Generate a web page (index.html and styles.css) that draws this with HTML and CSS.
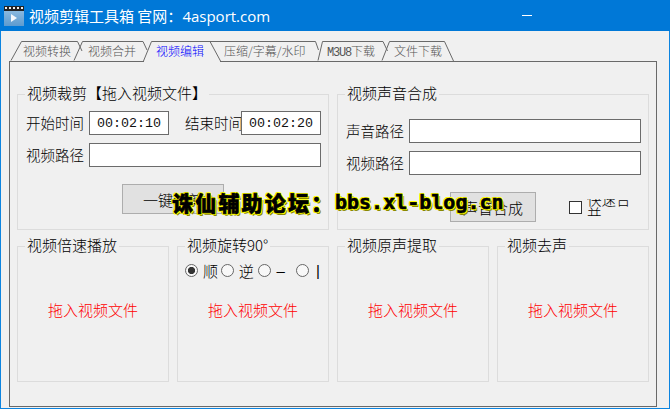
FILE: index.html
```html
<!DOCTYPE html>
<html lang="zh-CN">
<head>
<meta charset="utf-8">
<title>视频剪辑工具箱</title>
<link rel="stylesheet" href="styles.css">
</head>
<body>
<div class="window">
  <header class="titlebar">
    <svg class="app-icon" width="20" height="20" viewBox="0 0 20 20">
      <defs><linearGradient id="ic" x1="0" y1="0" x2="0" y2="1"><stop offset="0" stop-color="#8dbbe0"/><stop offset="1" stop-color="#5e9bcf"/></linearGradient></defs>
      <rect x="0" y="4" width="20" height="16" fill="url(#ic)"/>
      <rect x="0" y="0" width="20" height="5" fill="#222"/>
      <path d="M1 1h2v2h-2zM5 1h2v2h-2zM9 1h2v2h-2zM13 1h2v2h-2zM17 1h2v2h-2z" fill="#eee"/>
      <path d="M7 8l6 4-6 4z" fill="#f4f8fc"/>
    </svg>
    <span class="title">视频剪辑工具箱 官网：<span class="title-url">4asport.com</span></span>
    <span class="minimize"></span>
  </header>
  <nav class="tabs">
    <svg class="tab-lines" width="648" height="31" viewBox="9 31 648 31">
      <path d="M11 60.500L21.500 41.500H77.500L82 51" />
      <path d="M74 60.500L82.500 41.500H143L147 50" />
      <path d="M210 41.500H315.500L318.500 50" />
      <path d="M318 60.500L322.500 41.500H383L387.500 51" />
      <path d="M382 60.500L389.500 41.500H444.500L453.500 61" />
      <path class="gap" d="M144 61.500H220" />
      <path d="M143.500 61L151.500 41.500H210L220.500 61" />
    </svg>
    <span class="tab">视频转换</span>
    <span class="tab">视频合并</span>
    <span class="tab tab-active">视频编辑</span>
    <span class="tab">压缩/字幕/水印</span>
    <span class="tab"><span class="tab-latin">M3U8</span>下载</span>
    <span class="tab">文件下载</span>
  </nav>
  <main class="panel">
    <fieldset class="group span-2">
      <legend>视频裁剪【拖入视频文件】</legend>
      <div class="row first-row">
        <label class="field-label">开始时间</label>
        <input class="field time" value="00:02:10">
        <label class="field-label clipped">结束时间</label>
        <input class="field time" value="00:02:20">
      </div>
      <div class="row">
        <label class="field-label">视频路径</label>
        <input class="field path">
      </div>
      <div class="row action-row crop-action">
        <button class="btn btn-crop">一键裁剪</button>
      </div>
    </fieldset>
    <fieldset class="group span-2">
      <legend>视频声音合成</legend>
      <div class="row first-row-b">
        <label class="field-label">声音路径</label>
        <input class="field path">
      </div>
      <div class="row">
        <label class="field-label">视频路径</label>
        <input class="field path">
      </div>
      <div class="row action-row merge-action">
        <button class="btn btn-merge">声音合成</button>
        <span class="check"></span>
        <span class="check-label"><span class="check-text">快速合并</span></span>
      </div>
    </fieldset>
    <fieldset class="group">
      <legend>视频倍速播放</legend>
      <p class="drop">拖入视频文件</p>
    </fieldset>
    <fieldset class="group">
      <legend>视频旋转90°</legend>
      <div class="radios">
        <span class="radio-item w36"><span class="radio on"></span><span>顺</span></span>
        <span class="radio-item w38"><span class="radio"></span><span>逆</span></span>
        <span class="radio-item w38"><span class="radio"></span><span class="small">–</span></span>
        <span class="radio-item"><span class="radio"></span><span class="small bar">|</span></span>
      </div>
      <p class="drop drop-low">拖入视频文件</p>
    </fieldset>
    <fieldset class="group">
      <legend>视频原声提取</legend>
      <p class="drop">拖入视频文件</p>
    </fieldset>
    <fieldset class="group">
      <legend>视频去声</legend>
      <p class="drop">拖入视频文件</p>
    </fieldset>
  </main>
  <div class="watermark"><span class="wm-cn">诛仙辅助论坛：</span><span class="wm-en">bbs.xl-blog.cn</span></div>
</div>
</body>
</html>
```
FILE: styles.css
```css
* { box-sizing: border-box; }
html, body { margin: 0; padding: 0; }
body {
  width: 670px;
  height: 409px;
  overflow: hidden;
  font-family: "Noto Sans CJK SC", "Liberation Sans", sans-serif;
  font-weight: 300;
  color: #000;
}
.window {
  position: relative;
  width: 670px;
  height: 409px;
  border: 1px solid #0c84e0;
  border-top-color: #1a80d8;
  background: #f0f0f0;
}
.titlebar {
  display: flex;
  align-items: center;
  width: 670px;
  height: 31px;
  margin: -1px -1px 0;
  padding-left: 4px;
  background: #0078d7;
  color: #fff;
}
.app-icon { flex: none; }
.title {
  margin-left: 5px;
  font-size: 15px;
  font-weight: 400;
  line-height: 20px;
  white-space: pre;
}
.title-url { font-family: "Open Sans", sans-serif; }
.minimize {
  width: 10px;
  height: 1px;
  margin-left: auto;
  margin-right: 138px;
  background: #fff;
}
.tabs {
  position: relative;
  display: grid;
  grid-template-columns: 65px 68px 68px 103px 67px auto;
  height: 30px;
  margin-left: 8px;
  padding: 11px 0 0 14px;
  font-size: 12px;
  line-height: 17px;
  color: #555;
}
.tab { white-space: nowrap; }
.tab-active { color: #0000ff; }
.tab-latin { font-family: "Liberation Mono", monospace; font-size: 12px; letter-spacing: -1.2px; }
.tab-lines {
  position: absolute;
  left: 0;
  top: 0;
  z-index: 1;
  overflow: visible;
}
.tab-lines path { fill: none; stroke: #696969; stroke-width: 1; }
.tab-lines path.gap { stroke: #f0f0f0; stroke-width: 2; }
.panel {
  display: grid;
  grid-template-columns: repeat(4, 152px);
  grid-template-rows: 144px 144px;
  gap: 8px;
  width: 648px;
  height: 346px;
  margin-left: 8px;
  padding: 24px 0 0 7px;
  border: 1px solid #696969;
}
.span-2 { grid-column: span 2; }
.group {
  min-width: 0;
  margin: 0;
  padding: 0 8px;
  border: 1px solid #dcdcdc;
}
.group legend {
  margin-left: -1px;
  padding: 0 2px 2px;
  font-size: 15px;
  line-height: 14px;
  white-space: nowrap;
}
.row { display: flex; align-items: center; margin-top: 8px; }
.first-row { margin-top: 9px; }
.first-row-b { margin-top: 17px; }
.field-label {
  flex: none;
  width: 63px;
  font-size: 14.5px;
  line-height: 20px;
  white-space: nowrap;
}
.clipped { width: 56px; margin-left: 16px; overflow: hidden; }
.field {
  flex: none;
  height: 24px;
  padding: 0 0 0 7px;
  border: 1px solid #6b6b6b;
  border-radius: 0;
  background: #fff;
  outline: none;
  font-family: "Liberation Mono", monospace;
  font-size: 13.33px;
  color: #111;
}
.time { width: 80px; }
.path { width: 232px; }
.action-row { margin-top: 17px; }
.btn {
  flex: none;
  border: 1px solid #adadad;
  border-radius: 0;
  padding: 0;
  background: #e1e1e1;
  font-family: inherit;
  font-weight: 300;
  font-size: 15px;
  color: #000;
}
.btn-crop { width: 102px; height: 30px; margin-left: 96px; }
.btn-merge { width: 86px; height: 30px; margin-left: 104px; }
.check {
  flex: none;
  width: 13px;
  height: 13px;
  margin-left: 33px;
  border: 1px solid #333;
  background: #fff;
}
.check-label {
  flex: none;
  width: 45px;
  height: 17px;
  margin-left: 5px;
  overflow: hidden;
  font-size: 14.5px;
  line-height: 15px;
}
.check-text { display: block; width: 45px; margin-top: -8px; }
.drop {
  margin: 48px 0 0;
  font-size: 15px;
  line-height: 16px;
  text-align: center;
  color: #ff0000;
}
.drop-low { margin-top: 24px; }
.radios {
  display: flex;
  height: 15px;
  margin: 9px 0 0 -1px;
  font-size: 15px;
  line-height: 15px;
}
.radio-item { display: flex; align-items: center; gap: 5px; white-space: nowrap; }
.w36 { width: 36px; }
.w38 { width: 38px; }
.radio {
  flex: none;
  width: 13px;
  height: 13px;
  border: 1px solid #666;
  border-radius: 50%;
  background: #f8f8f8;
}
.radio.on { background: radial-gradient(circle, #333 0 3.4px, #f8f8f8 3.8px); }
.small { font-family: "Liberation Sans", sans-serif; }
.bar { margin-left: 2px; font-weight: 400; }
.watermark {
  position: absolute;
  left: 171px;
  top: 187px;
  z-index: 2;
  display: flex;
  align-items: center;
  height: 28px;
  color: #000;
  white-space: nowrap;
  -webkit-text-stroke: 0.6px #000;
  text-shadow:
    -1px -1px 0 #ff0, 0 -1px 0 #ff0, 1px -1px 0 #ff0,
    -1px 0 0 #ff0, 1px 0 0 #ff0,
    -1px 1px 0 #ff0, 0 1px 0 #ff0, 1px 1px 0 #ff0,
    2px 2px 0 #8a8a00;
}
.wm-cn {
  width: 163px;
  font-family: "Noto Sans CJK SC", sans-serif;
  font-size: 21px;
  font-weight: 900;
  letter-spacing: 2.2px;
}
.wm-en {
  font-family: "DejaVu Sans Mono", monospace;
  font-size: 20px;
  font-weight: 700;
}
```
